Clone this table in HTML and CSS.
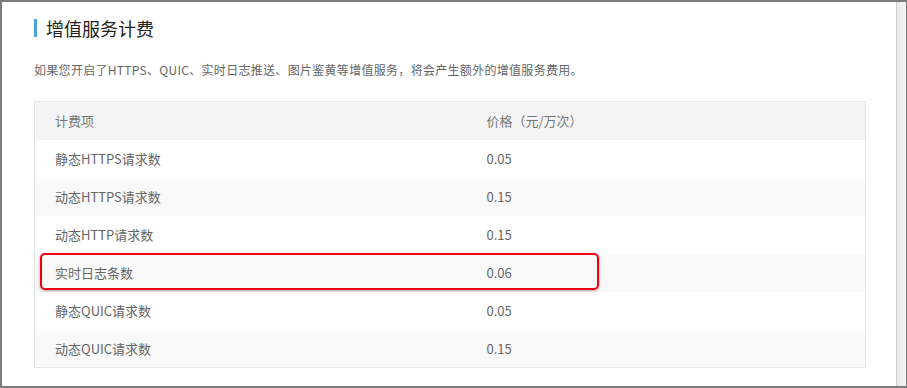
FILE: index.html
```html
<!DOCTYPE html>
<html lang="zh">
<head>
<meta charset="utf-8">
<link rel="stylesheet" href="styles.css">
</head>
<body>
<div class="frame">
  <div class="content">
    <h2 class="title">增值服务计费</h2>
    <p class="desc">如果您开启了HTTPS、QUIC、实时日志推送、图片鉴黄等增值服务，将会产生额外的增值服务费用。</p>
    <div class="table-wrap">
      <table class="price">
        <thead>
          <tr><th class="c1">计费项</th><th>价格（元/万次）</th></tr>
        </thead>
        <tbody>
          <tr><td class="c1">静态HTTPS请求数</td><td>0.05</td></tr>
          <tr><td class="c1">动态HTTPS请求数</td><td>0.15</td></tr>
          <tr><td class="c1">动态HTTP请求数</td><td>0.15</td></tr>
          <tr><td class="c1">实时日志条数</td><td>0.06</td></tr>
          <tr><td class="c1">静态QUIC请求数</td><td>0.05</td></tr>
          <tr><td class="c1">动态QUIC请求数</td><td>0.15</td></tr>
        </tbody>
      </table>
      <div class="highlight"></div>
    </div>
  </div>
  <div class="scrollbar"></div>
</div>
</body>
</html>
```
FILE: styles.css
```css
* { box-sizing: border-box; }
html, body { margin: 0; padding: 0; background: #fff; }
body {
  font-family: "Noto Sans CJK SC", "Noto Sans", sans-serif;
  width: 907px;
  height: 388px;
  overflow: hidden;
}
.frame {
  width: 907px;
  height: 388px;
  display: flex;
  border-top: 2px solid #7b7b7b;
  border-left: 2px solid #7b7b7b;
  border-bottom: 2px solid #7b7b7b;
  border-right: 1px solid #7b7b7b;
}
.content {
  flex: 1;
  padding: 17px 30px 0 32px;
  background: #fff;
}
.scrollbar {
  width: 10px;
  background: linear-gradient(to right, #e8e8e8, #f6f6f6);
  border-left: 1px solid #cfcfcf;
}
.title {
  margin: 0;
  font-size: 18px;
  line-height: 18px;
  font-weight: normal;
  color: #222;
  border-left: 3px solid #4fa3dc;
  padding-left: 9px;
}
.desc {
  margin: 24px 0 0 0;
  font-size: 12px;
  line-height: 18px;
  color: #666;
  letter-spacing: 0.3px;
}
.table-wrap {
  position: relative;
  margin-top: 22px;
}
.price {
  width: 832px;
  border-collapse: collapse;
  border: 1px solid #e6e6e6;
  font-size: 13px;
  color: #666;
}
.price th, .price td {
  height: 38px;
  padding: 0 0 0 20px;
  text-align: left;
  font-weight: normal;
  vertical-align: middle;
}
.price th { background: #f4f4f4; color: #777; }
.price .c1 { width: 432px; }
.price tbody tr:nth-child(odd) td { background: #fff; }
.price tbody tr:nth-child(even) td { background: #f9f9f9; }
.highlight {
  position: absolute;
  left: 6px;
  top: 152px;
  width: 559px;
  height: 37px;
  border: 2px solid #f00010;
  border-radius: 5px;
  box-shadow: 0 1px 3px rgba(0,0,0,0.35);
}
```
